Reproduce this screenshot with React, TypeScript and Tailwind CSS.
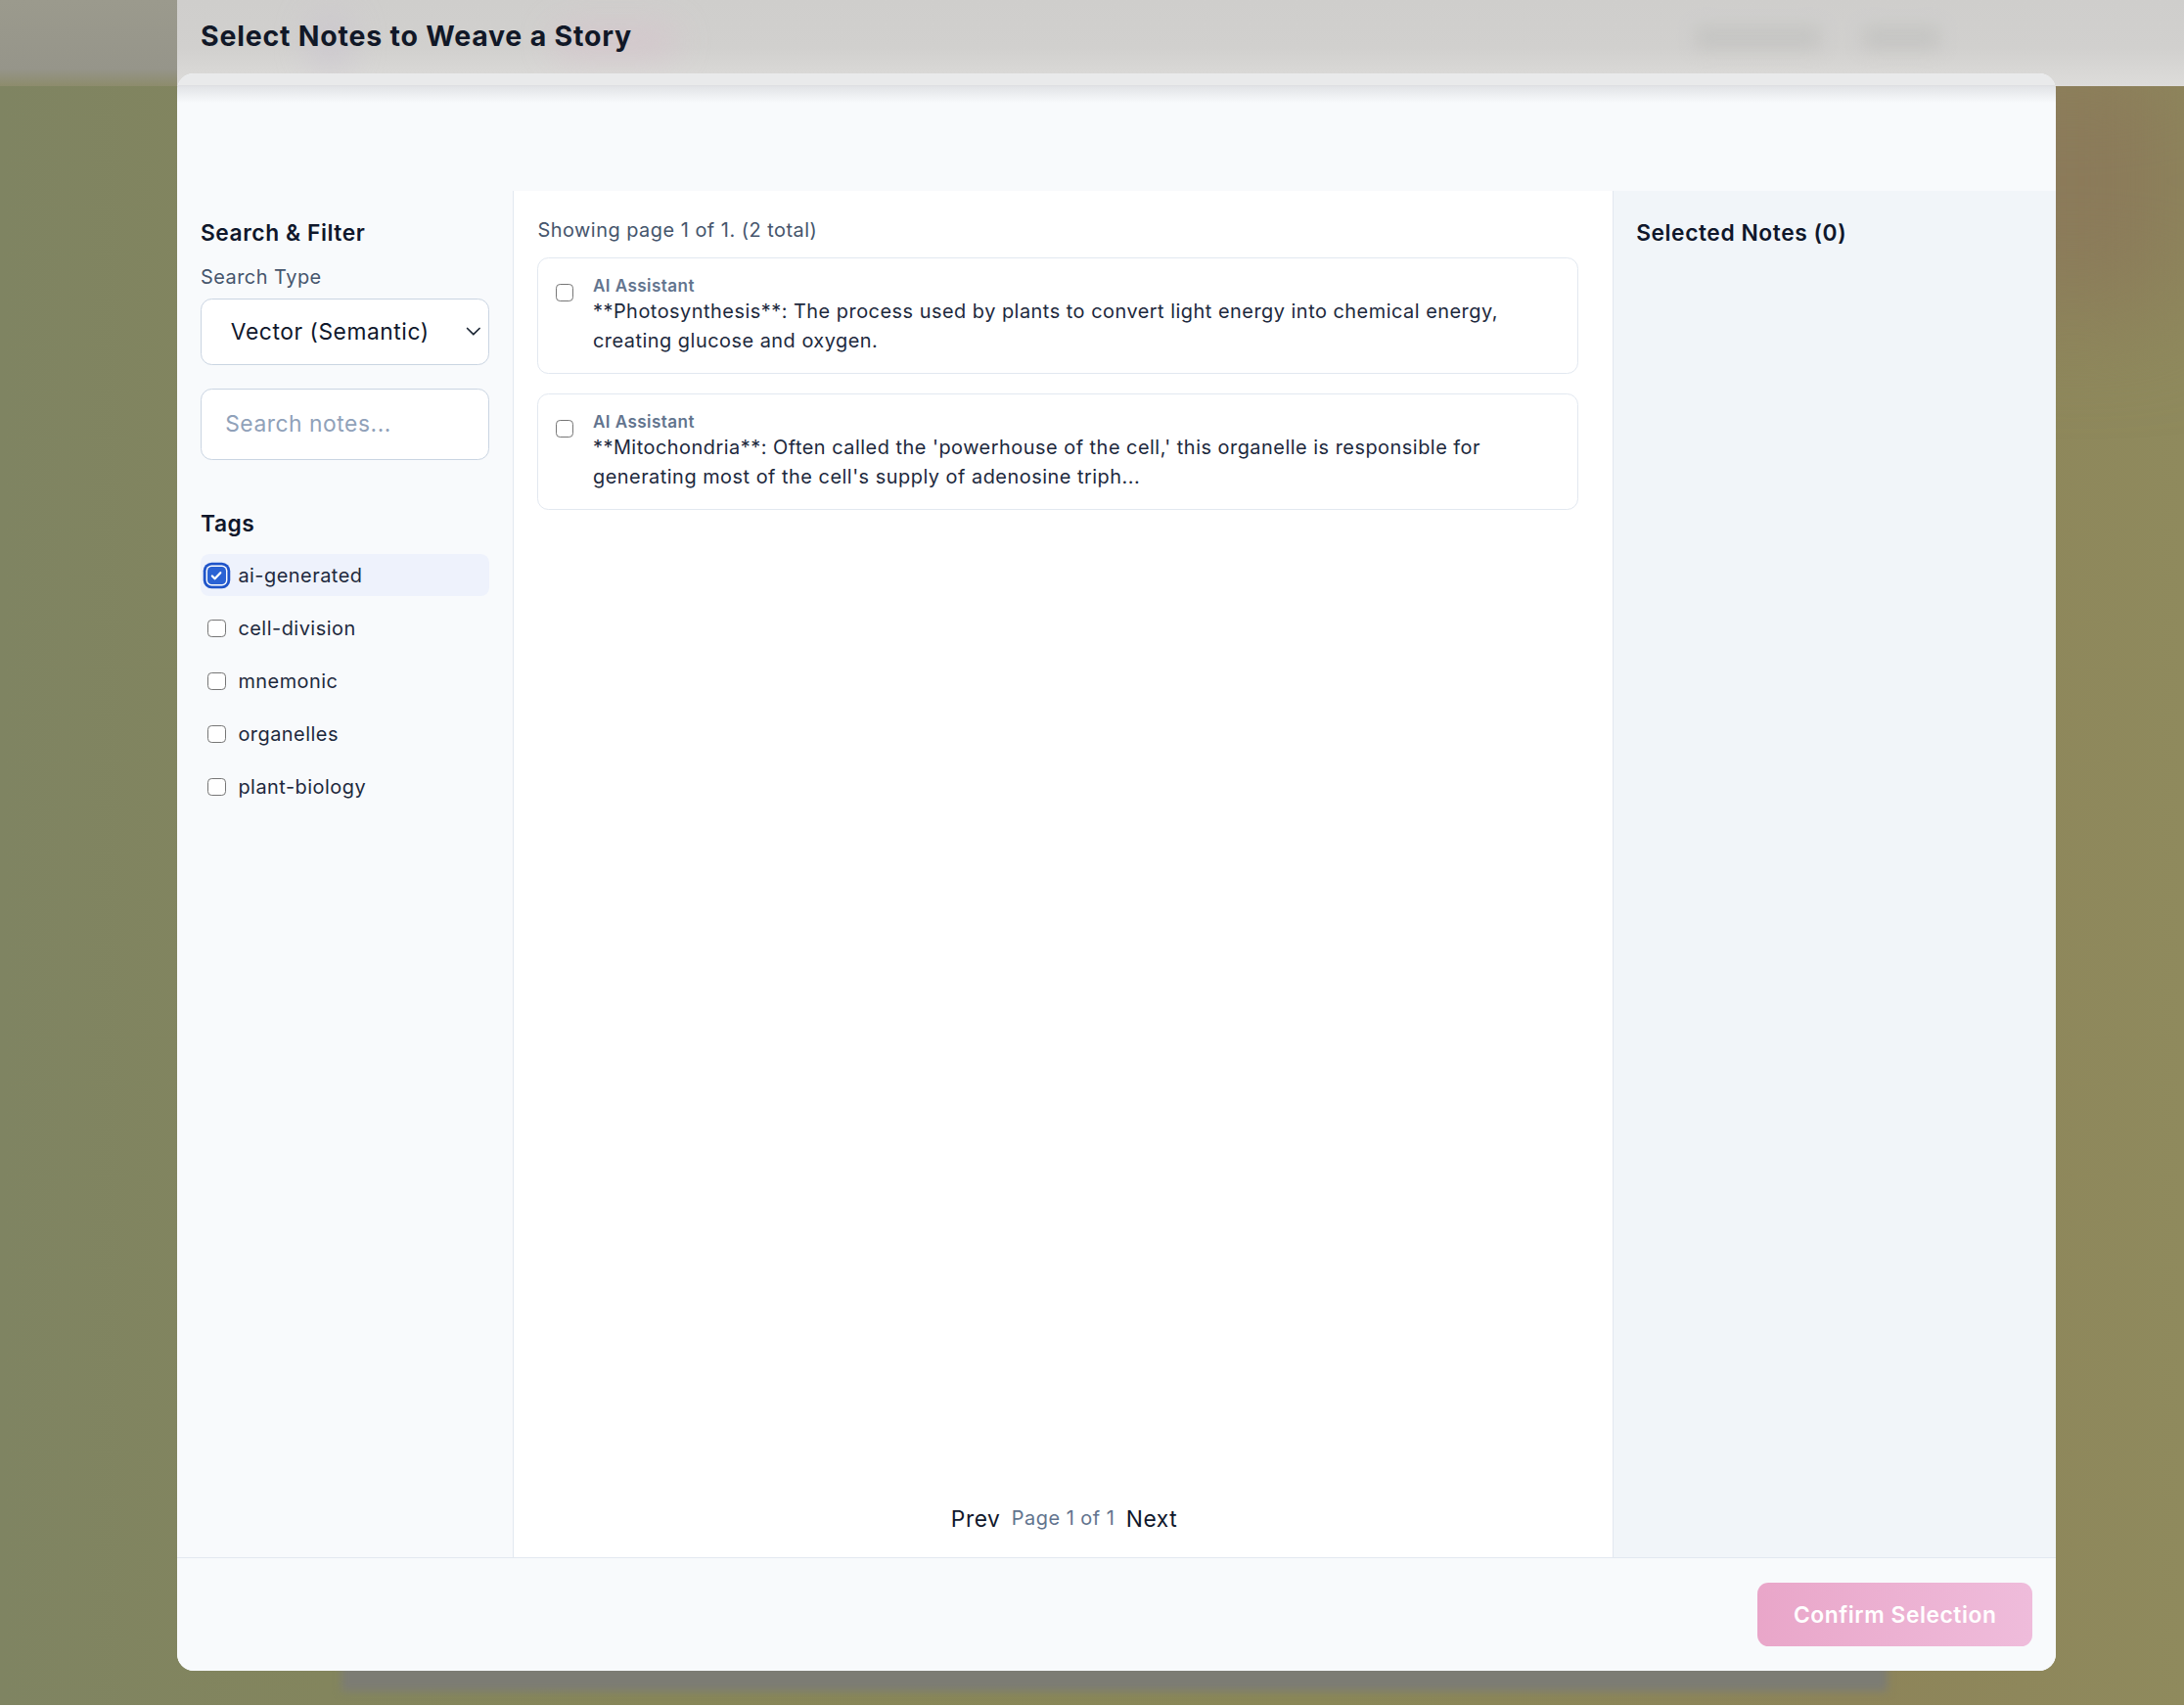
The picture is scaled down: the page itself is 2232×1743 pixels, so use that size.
import React from "react";

const tags = ["ai-generated", "cell-division", "mnemonic", "organelles", "plant-biology"];

const notes = [
  {
    author: "AI Assistant",
    text: "**Photosynthesis**: The process used by plants to convert light energy into chemical energy, creating glucose and oxygen.",
  },
  {
    author: "AI Assistant",
    text: "**Mitochondria**: Often called the 'powerhouse of the cell,' this organelle is responsible for generating most of the cell's supply of adenosine triph...",
  },
];

function CheckBox({ checked = false }: { checked?: boolean }) {
  if (checked) {
    return (
      <span className="flex h-[13px] w-[13px] shrink-0 items-center justify-center rounded-[3px] bg-[#2a62d4] ring-2 ring-[#1f54c9] ring-offset-1 ring-offset-white">
        <svg viewBox="0 0 12 12" className="h-[10px] w-[10px]">
          <path d="M2.4 6.3l2.3 2.3 4.8-5.1" fill="none" stroke="white" strokeWidth="1.9" strokeLinecap="round" strokeLinejoin="round" />
        </svg>
      </span>
    );
  }
  return <span className="block h-[13px] w-[13px] shrink-0 rounded-[3px] border border-[#767676] bg-white" />;
}

const App: React.FC = () => {
  return (
    <div className="relative h-[1224px] w-[1568px] overflow-hidden bg-[linear-gradient(90deg,#7f8462_0%,#878658_30%,#8a8757_60%,#8d8459_85%,#8f8a5d_100%)] font-['Inter',sans-serif] [zoom:1.4235]">
      {/* blurred page behind the overlay */}
      <div className="absolute right-0 top-[40px] h-[180px] w-[160px] bg-[#8b7a5a] blur-2xl" />
      <div className="absolute left-[245px] top-[1188px] h-[26px] w-[1110px] bg-[#7c7c74] blur-[3px]" />

      {/* top bar (blurred nav under the dialog) */}
      <div className="absolute inset-x-0 top-0 flex h-[62px]">
        <div className="w-[127px] bg-[linear-gradient(to_bottom,#9b9a8d,#96958a_80%,#8d8c6c)]" />
        <div className="relative flex-1 bg-[linear-gradient(to_bottom,#cfcecc,#d1d0ce_55%,#dddcda)]">
          <div className="absolute left-[95px] top-[8px] h-[44px] w-[30px] rounded-full bg-[#c9c3cf] opacity-60 blur-md" />
          <div className="absolute left-[270px] top-[18px] h-[22px] w-[90px] rounded-full bg-[#d6c3cc] opacity-70 blur-md" />
          <div className="absolute left-[1090px] top-[18px] h-[18px] w-[90px] rounded bg-[#c3c3c1] opacity-80 blur-[6px]" />
          <div className="absolute left-[1210px] top-[18px] h-[18px] w-[56px] rounded bg-[#c3c3c1] opacity-80 blur-[6px]" />
          <h2 className="absolute left-[17px] top-[12px] text-[20px] leading-7 font-bold tracking-[0.028em] text-[#111827]">
            Select Notes to Weave a Story
          </h2>
        </div>
      </div>

      {/* dialog */}
      <div className="relative z-10 ml-[127px] mt-[53px] flex h-[1146px] w-[1349px] flex-col overflow-hidden rounded-xl bg-[#f8fafc]">
        <div className="h-[9px] shrink-0 border-b border-[#dedfe2] bg-[#e9eaeb]" />
        <div className="h-[75px] shrink-0 bg-[linear-gradient(to_bottom,#e1e3e6,#f8fafc_12px)]" />

        <div className="flex min-h-0 flex-1">
          {/* filters */}
          <aside className="w-[242px] shrink-0 border-r border-slate-200 bg-[#f8fafc] px-[17px] pt-[18px]">
            <h3 className="text-base leading-6 font-semibold tracking-wide text-slate-900">Search &amp; Filter</h3>
            <p className="mt-2.5 text-sm leading-5 tracking-wide text-slate-600">Search Type</p>
            <div className="mt-[5px] flex h-12 items-center justify-between rounded-lg border border-slate-300 bg-white pl-[21px] pr-[5px]">
              <span className="text-base leading-7 tracking-wide text-slate-900">Vector (Semantic)</span>
              <svg viewBox="0 0 12 8" className="h-[7px] w-[11px]">
                <path d="M1 1.2l5 5 5-5" fill="none" stroke="#1f2937" strokeWidth="1.4" strokeLinecap="round" strokeLinejoin="round" />
              </svg>
            </div>
            <div className="mt-[17px] flex h-[51px] items-center rounded-lg border border-slate-300 bg-white px-[17px]">
              <span className="text-base leading-7 tracking-wide text-slate-400">Search notes...</span>
            </div>

            <h3 className="mt-[34px] text-base leading-6 font-semibold tracking-wide text-slate-900">Tags</h3>
            <div className="mt-[10px] flex flex-col gap-2">
              {tags.map((t, i) => (
                <div
                  key={t}
                  className={`flex h-[30px] items-center gap-[9px] rounded-md pl-[5px] ${i === 0 ? "bg-[#eef2fc]" : ""}`}
                >
                  <CheckBox checked={i === 0} />
                  <span className="text-sm leading-5 tracking-wide text-slate-800">{t}</span>
                </div>
              ))}
            </div>
          </aside>

          {/* notes */}
          <main className="flex min-w-0 flex-1 flex-col bg-white pt-[18px] pb-4 pl-[17px] pr-[25px]">
            <p className="text-sm leading-5 tracking-wide text-slate-600">Showing page 1 of 1. (2 total)</p>
            <div className="mt-2.5 flex flex-1 flex-col gap-3.5">
              {notes.map((n, i) => (
                <div key={i} className="flex items-start gap-3.5 rounded-lg border border-slate-200 bg-white p-3">
                  <div className="mt-[6px]">
                    <CheckBox />
                  </div>
                  <div className="min-w-0 flex-1">
                    <div className="text-xs leading-4 font-semibold tracking-wide text-slate-500">{n.author}</div>
                    <p className="text-sm leading-[21px] tracking-wide text-slate-800">{n.text}</p>
                  </div>
                </div>
              ))}
            </div>
            <div className="mr-[-9px] flex items-center justify-center gap-2">
              <button className="text-base leading-6 tracking-wide text-slate-900">Prev</button>
              <span className="text-sm leading-5 tracking-wide text-slate-500">Page 1 of 1</span>
              <button className="text-base leading-6 tracking-wide text-slate-900">Next</button>
            </div>
          </main>

          {/* selection */}
          <aside className="w-[318px] shrink-0 border-l border-slate-200 bg-[#f1f5f9] px-4 pt-[18px]">
            <h3 className="text-base leading-6 font-semibold tracking-wide text-slate-900">Selected Notes (0)</h3>
          </aside>
        </div>

        <footer className="flex h-[81px] shrink-0 items-center justify-end border-t border-slate-200 bg-[#f8fafc] pr-[17px]">
          <button className="h-[46px] w-[197px] rounded-lg bg-gradient-to-r from-[#e9a6c9] to-[#efbcdb] text-base font-semibold tracking-wide text-white">
            Confirm Selection
          </button>
        </footer>
      </div>
    </div>
  );
};

export default App;
